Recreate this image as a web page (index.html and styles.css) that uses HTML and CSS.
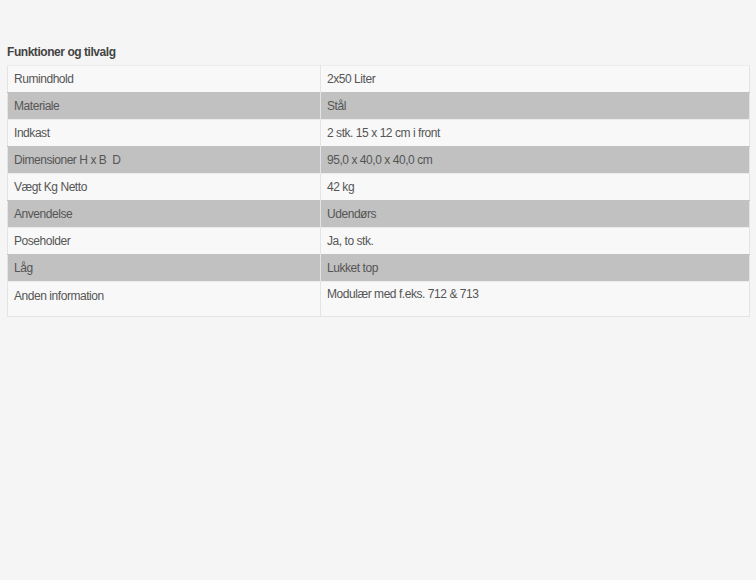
FILE: index.html
```html
<!DOCTYPE html>
<html lang="da">
<head>
<meta charset="utf-8">
<link rel="stylesheet" href="styles.css">
</head>
<body>
<div class="wrap">
  <h3 class="title">Funktioner og tilvalg</h3>
  <table class="specs">
    <tbody>
      <tr><td class="k">Rumindhold</td><td class="v">2x50 Liter</td></tr>
      <tr class="alt"><td class="k">Materiale</td><td class="v">Stål</td></tr>
      <tr><td class="k">Indkast</td><td class="v">2 stk. 15 x 12 cm i front</td></tr>
      <tr class="alt"><td class="k">Dimensioner H x B &nbsp;D</td><td class="v">95,0 x 40,0 x 40,0 cm</td></tr>
      <tr><td class="k">Vægt Kg Netto</td><td class="v">42 kg</td></tr>
      <tr class="alt"><td class="k">Anvendelse</td><td class="v">Udendørs</td></tr>
      <tr><td class="k">Poseholder</td><td class="v">Ja, to stk.</td></tr>
      <tr class="alt"><td class="k">Låg</td><td class="v">Lukket top</td></tr>
      <tr class="last"><td class="k">Anden information</td><td class="v">Modulær med f.eks. 712 &amp; 713</td></tr>
    </tbody>
  </table>
</div>
</body>
</html>
```

FILE: styles.css
```css
html, body {
  margin: 0;
  padding: 0;
  background: #f5f5f5;
}
body {
  font-family: "Liberation Sans", Arial, sans-serif;
  font-size: 12px;
  letter-spacing: -0.45px;
  color: #555;
}
.wrap {
  padding: 45px 6px 0 7px;
}
.title {
  margin: 0 0 6px 0;
  font-size: 12px;
  font-weight: bold;
  color: #444;
  line-height: 14px;
}
.specs {
  width: 743px;
  border-collapse: collapse;
  border: 1px solid #e4e4e4;
  background: #f8f8f8;
}
.specs td {
  height: 27px;
  padding: 0 6px;
  box-sizing: border-box;
  vertical-align: middle;
  line-height: 14px;
  border-top: 1px solid #ececec;
}
.specs td.k {
  width: 313px;
  border-right: 1px solid #e4e4e4;
}
.specs tr.alt td {
  background: #c1c1c1;
  border-top-color: #c1c1c1;
}
.specs tr.last td {
  height: 35px;
  vertical-align: top;
  padding-top: 7px;
}
.specs tr.last td.v {
  padding-top: 5px;
}
```
